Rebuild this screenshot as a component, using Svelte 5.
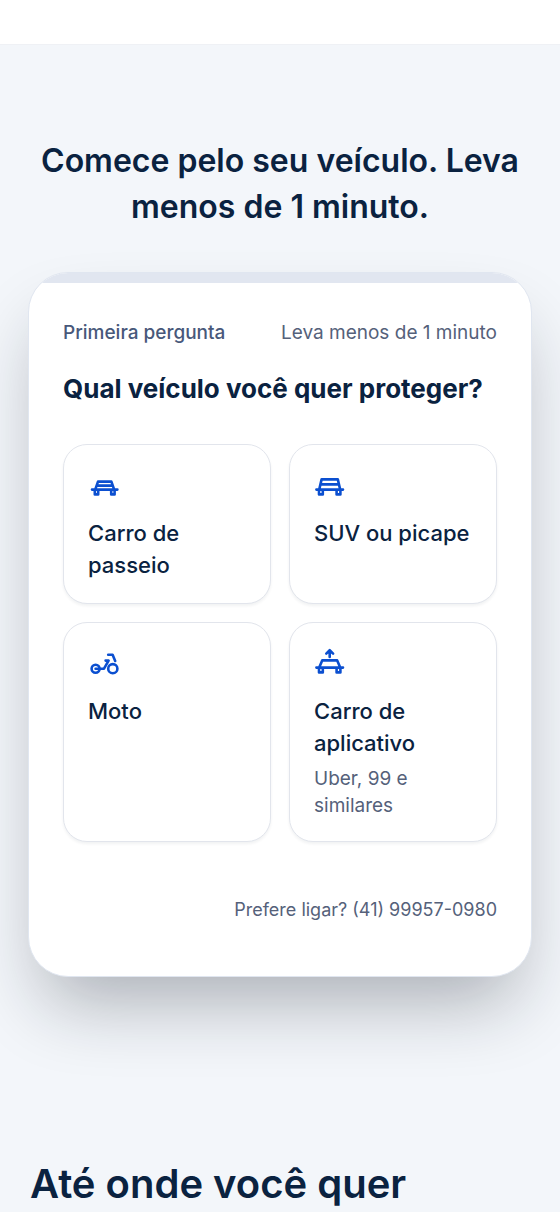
<script lang="ts">
	type Vehicle = { id: string; label: string; hint?: string };

	const vehicles: Vehicle[] = [
		{ id: 'car', label: 'Carro de passeio' },
		{ id: 'suv', label: 'SUV ou picape' },
		{ id: 'moto', label: 'Moto' },
		{ id: 'app', label: 'Carro de aplicativo', hint: 'Uber, 99 e similares' }
	];

	let selected = $state('');
</script>

{#snippet icon(id: string)}
	<svg class="icon" viewBox="0 0 34 34" aria-hidden="true">
		{#if id === 'car'}
			<path d="M4 20.6h25.4M7.2 20.6l2.8-8h13.4l2.8 8M9 16.6h15.6M6.8 20.6v4.8h3.4v-4.8M23.2 20.6v4.8h3.4v-4.8" />
		{:else if id === 'suv'}
			<path d="M2.4 20.6h26.6M5.2 20.6l2.4-10.2h16.2l2.4 10.2M6.4 15.4h18.6M5 20.6v4.8h3.8v-4.8M22.6 20.6v4.8h3.8v-4.8" />
		{:else if id === 'moto'}
			<circle cx="7.6" cy="21.7" r="4" />
			<circle cx="24.8" cy="21.7" r="4.6" />
			<path d="M7.6 21.7h8.4l4.6-8.1h-3M20.2 7.8h4.4l2.6 6.2" />
		{:else}
			<path d="M15.7 10V3.6M12.3 6.6l3.4-3.4 3.4 3.4M2.4 20.6h26.6M5.2 20.6l3-7.2h15l3 7.2M5 20.6v4.8h3.8v-4.8M22.6 20.6v4.8h3.8v-4.8" />
		{/if}
	</svg>
{/snippet}

<div class="strip"></div>

<main>
	<section class="quote">
		<h1>Comece pelo seu veículo. Leva menos de 1 minuto.</h1>

		<div class="card">
			<div class="progress"></div>
			<div class="body">
				<div class="meta">
					<strong>Primeira pergunta</strong>
					<span>Leva menos de 1 minuto</span>
				</div>
				<h2>Qual veículo você quer proteger?</h2>

				<div class="options">
					{#each vehicles as { id, label, hint } (id)}
						<button
							type="button"
							class:active={selected === id}
							aria-pressed={selected === id}
							onclick={() => (selected = id)}
						>
							{@render icon(id)}
							<span class="label">{label}</span>
							{#if hint}
								<span class="hint">{hint}</span>
							{/if}
						</button>
					{/each}
				</div>

				<a class="call" href="tel:+5541999570980">Prefere ligar? (41) 99957-0980</a>
			</div>
		</div>
	</section>

	<section class="coverage">
		<h2>Até onde você quer</h2>
	</section>
</main>

<style>
	:global(body) {
		margin: 0;
		background: #f3f6fa;
	}

	.strip {
		height: 44px;
		background: #fff;
		border-bottom: 1px solid #eff1f5;
	}

	main {
		font-family: Inter, 'Liberation Sans', sans-serif;
		color: #0a2240;
	}

	h1,
	h2 {
		margin: 0;
		font-weight: 600;
	}

	.quote {
		padding: 93px 28px 0;
	}

	h1 {
		font-size: 32px;
		line-height: 46px;
		text-align: center;
	}

	.card {
		margin-top: 42px;
		border: 1px solid #e0e6f0;
		border-radius: 40px;
		overflow: hidden;
		background: #fff;
		box-shadow: 0 40px 72px -16px rgb(20 26 36 / 0.32);
	}

	.progress {
		height: 10px;
		background: #e1e6f0;
	}

	.body {
		padding: 36px 34px 52px;
	}

	.meta {
		display: flex;
		justify-content: space-between;
		font-size: 19px;
		line-height: 28px;
		color: #55617a;
	}

	.meta strong {
		font-weight: 500;
		color: #48587a;
	}

	.body h2 {
		margin-top: 24px;
		font-size: 26px;
		font-weight: 700;
		line-height: 36px;
	}

	.options {
		display: grid;
		grid-template-columns: 1fr 1fr;
		gap: 18px;
		margin-top: 37px;
	}

	button {
		display: flex;
		flex-direction: column;
		align-items: flex-start;
		min-height: 160px;
		padding: 24px 24px 22px;
		border: 1px solid #e2e5ec;
		border-radius: 24px;
		background: #fff;
		box-shadow: 0 2px 3px rgb(16 28 48 / 0.06);
		font: inherit;
		color: inherit;
		text-align: left;
		cursor: pointer;
	}

	button.active {
		border-color: #0b4fd0;
	}

	.icon {
		width: 34px;
		height: 34px;
		margin-bottom: 14px;
		fill: none;
		stroke: #0b4fd0;
		stroke-width: 2.6;
		stroke-linecap: round;
		stroke-linejoin: round;
	}

	.label {
		font-size: 22px;
		font-weight: 500;
		line-height: 32px;
	}

	.hint {
		margin-top: 6px;
		font-size: 19px;
		line-height: 27px;
		color: #55617a;
	}

	.call {
		display: block;
		margin-top: 54px;
		font-size: 18px;
		line-height: 28px;
		text-align: right;
		text-decoration: none;
		color: #55617a;
	}

	.coverage {
		padding: 180px 30px 0;
	}

	.coverage h2 {
		font-size: 40px;
		line-height: 54px;
	}
</style>
